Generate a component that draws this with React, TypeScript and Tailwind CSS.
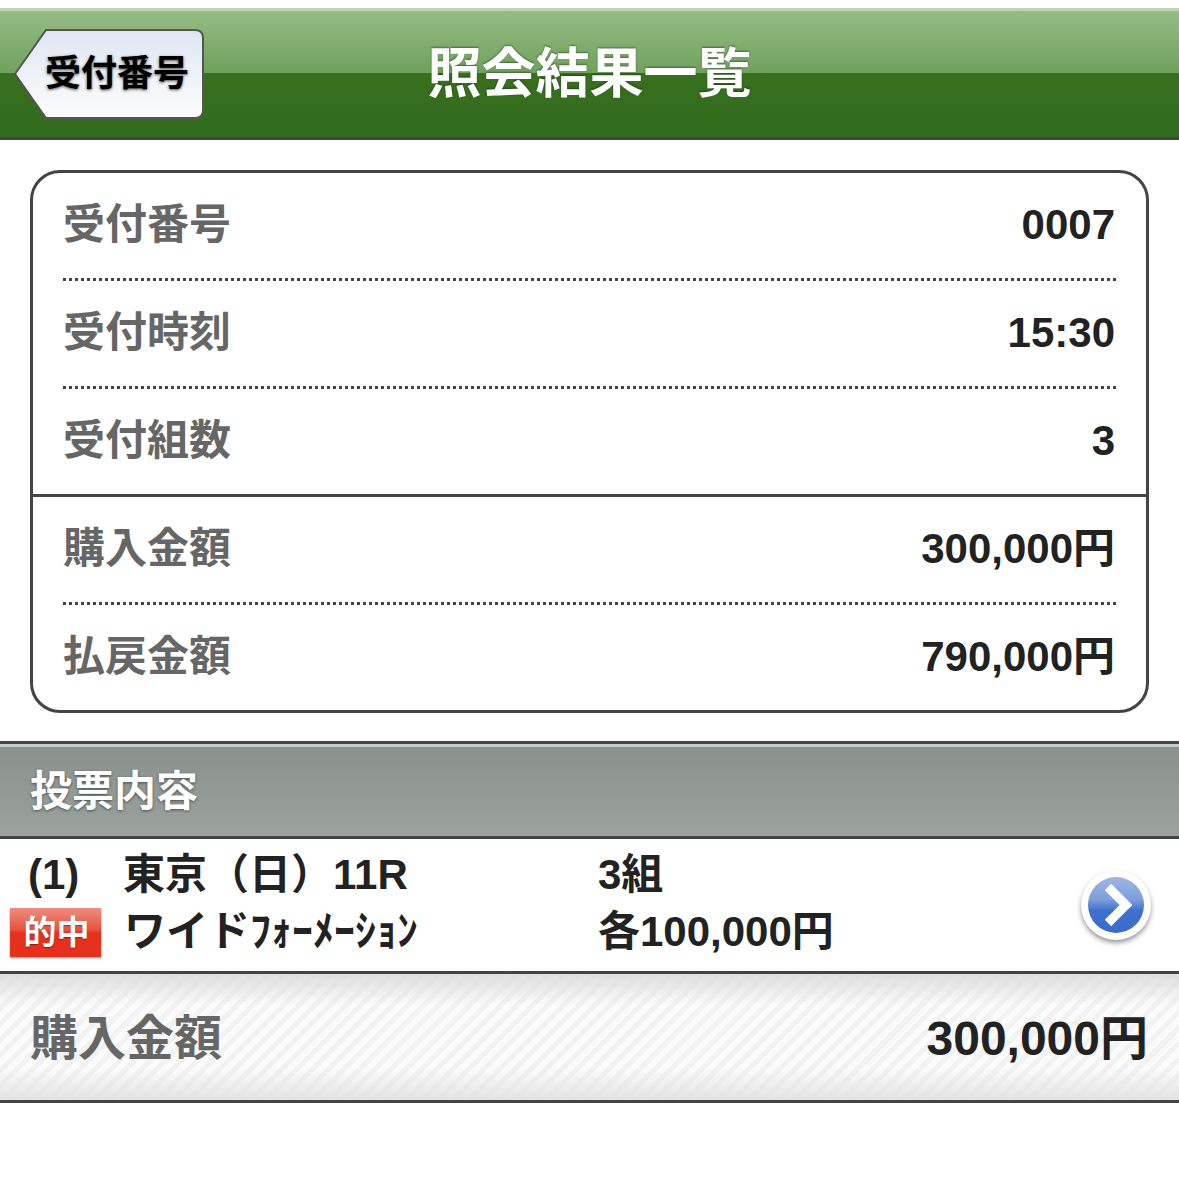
const jp = "font-['Liberation_Sans','Noto_Sans_CJK_JP',sans-serif]"

const Dots = () => (
    <div className="mx-[30px] h-[3px] bg-[repeating-linear-gradient(90deg,#444_0_3px,transparent_3px_6px)]" />
)

const InfoRow = ({ label, value }: { label: string; value: string }) => (
    <div className="flex h-[105px] items-center justify-between pr-[31px] pb-[2px] pl-[30px]">
        <span className="text-[42px] leading-none font-bold text-[#666]">{label}</span>
        <span className="text-[42px] leading-none font-bold text-[#222]">{value}</span>
    </div>
)

const BackButton = () => (
    <button className="relative ml-[14px] flex h-[90px] w-[190px] items-center justify-end pr-[15px]">
        <svg className="absolute inset-0" width="190" height="90" viewBox="0 0 190 90">
            <defs>
                <linearGradient id="back" x1="0" y1="0" x2="0" y2="1">
                    <stop offset="0" stopColor="#dfe6f1" />
                    <stop offset="1" stopColor="#fdfdfe" />
                </linearGradient>
            </defs>
            <path d="M32 1H181Q189 1 189 9V81Q189 89 181 89H32L1 45Z" fill="url(#back)" stroke="#555" strokeWidth="2" />
        </svg>
        <span className="relative text-[36px] leading-none font-bold text-black [text-shadow:0_1px_3px_rgba(0,0,0,0.7)]">受付番号</span>
    </button>
)

const ArrowIcon = () => (
    <div className="mb-[1px] flex h-[70px] w-[70px] items-center justify-center rounded-full bg-white shadow-[0_3px_5px_rgba(0,0,0,0.4)]">
        <div className="flex h-[56px] w-[56px] items-center justify-center rounded-full bg-[linear-gradient(#9db5e2_0%,#7f9fdb_40%,#3f70cf_60%,#3a6bcb_100%)]">
            <svg className="ml-[6px]" width="32" height="42" viewBox="0 0 32 42">
                <path d="M5 3L23 21L5 39" fill="none" stroke="#fff" strokeWidth="9" />
            </svg>
        </div>
    </div>
)

export default function App() {
    return (
        <div className={`${jp} h-[1193px] w-[1179px] overflow-hidden bg-white pt-[8px]`}>
            <header className="grid h-[132px] grid-cols-[1fr_auto_1fr] items-center border-t-[3px] border-b-[3px] border-t-[#bcd6b0] border-b-[#444] bg-[linear-gradient(#96bd84_0%,#6fa15d_49%,#38701f_49%,#336b1e_100%)]">
                <BackButton />
                <h1 className="pb-[1px] text-[54px] leading-none font-bold text-white [text-shadow:0_-1px_2px_rgba(0,0,0,0.4)]">照会結果一覧</h1>
                <div />
            </header>

            <section className="mx-[30px] mt-[30px] h-[543px] rounded-[30px] border-[3px] border-[#444]">
                <InfoRow label="受付番号" value="0007" />
                <Dots />
                <InfoRow label="受付時刻" value="15:30" />
                <Dots />
                <InfoRow label="受付組数" value="3" />
                <div className="h-[3px] bg-[#444]" />
                <InfoRow label="購入金額" value="300,000円" />
                <Dots />
                <InfoRow label="払戻金額" value="790,000円" />
            </section>

            <h2 className="mt-[28px] flex h-[98px] items-center border-t-[3px] border-b-[3px] border-t-[#444] border-b-[#444] bg-[linear-gradient(#c8ccc9_0,#c8ccc9_3px,#8a918d_3px,#9aa39d_100%)] pt-[4px] pl-[30px] text-[42px] leading-none font-bold text-white [text-shadow:0_1px_3px_rgba(0,0,0,0.5)]">
                投票内容
            </h2>

            <div className="flex h-[135px] items-center justify-between border-b-[3px] border-b-[#444] pr-[28px] text-[42px] leading-none font-bold text-[#222]">
                <div className="grid grid-cols-[123px_475px_auto] items-center gap-y-[12px]">
                    <span className="pl-[28px]">(1)</span>
                    <span>東京（日）11R</span>
                    <span>3組</span>
                    <div className="pl-[10px]">
                        <span className="flex h-[49px] w-[91px] items-center justify-center bg-[linear-gradient(#ee8f80_0%,#e8503e_45%,#e43220_50%,#e5301c_100%)] pl-[2px] text-[33px] leading-none text-white shadow-[0_1px_2px_rgba(0,0,0,0.4)] [text-shadow:0_1px_1px_rgba(0,0,0,0.4)]">的中</span>
                    </div>
                    <span className="ml-[1px]">ワイドﾌｫｰﾒｰｼｮﾝ</span>
                    <span>各100,000円</span>
                </div>
                <ArrowIcon />
            </div>

            <div className="flex h-[129px] items-center justify-between border-b-[3px] border-b-[#444] bg-[linear-gradient(rgba(220,220,220,0.9)_0,rgba(255,255,255,0)_25%,rgba(255,255,255,0)_75%,rgba(225,225,225,0.9)_100%),repeating-linear-gradient(135deg,#f2f2f2_0_5px,#fbfbfb_5px_11px)] pt-[4px] pr-[31px] pl-[30px] text-[48px] leading-none font-bold">
                <span className="text-[#666]">購入金額</span>
                <span className="text-[#222]">300,000円</span>
            </div>
        </div>
    )
}
